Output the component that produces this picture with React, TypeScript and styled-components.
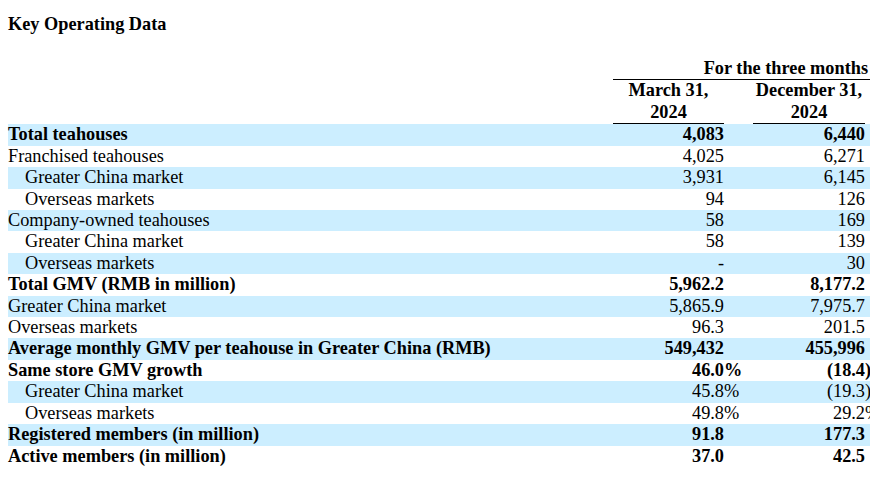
import React from "react";
import styled, { createGlobalStyle } from "styled-components";

const COLS = "605px 111px 29px 112px 28px 112px 28px";
const ROW_H = "21.43px";
const FONT = "18.3px";

const GlobalStyle = createGlobalStyle`
  html, body {
    margin: 0;
    padding: 0;
    overflow: hidden;
    background: #ffffff;
  }
  body {
    font-family: "Liberation Serif", "Times New Roman", serif;
    color: #000000;
  }
`;

const Page = styled.div`
  padding: 13.6px 0 0 8px;
  width: max-content;
`;

const Title = styled.h2`
  margin: 0;
  font-size: ${FONT};
  font-weight: bold;
  line-height: ${ROW_H};
`;

const Table = styled.div`
  margin-top: 22.9px;
  display: flex;
  flex-direction: column;
  width: max-content;
  font-size: ${FONT};
`;

const HeadRow = styled.div`
  display: grid;
  grid-template-columns: ${COLS};
  line-height: ${ROW_H};
  font-weight: bold;
`;

const GroupHead = styled.div`
  grid-column: 2 / 7;
  padding-left: 5px;
  text-align: center;
  white-space: nowrap;
  border-bottom: 1px solid #000000;
`;

const PeriodHead = styled.div<{ $col: number }>`
  grid-column: ${(p) => p.$col};
  text-align: center;
  white-space: nowrap;
  border-bottom: 1px solid #000000;
`;

const Row = styled.div<{ $shade: boolean; $bold: boolean }>`
  display: grid;
  grid-template-columns: ${COLS};
  height: ${ROW_H};
  line-height: ${ROW_H};
  background: ${(p) => (p.$shade ? "#cceeff" : "#ffffff")};
  font-weight: ${(p) => (p.$bold ? "bold" : "normal")};
  white-space: nowrap;
`;

const Label = styled.div<{ $indent: boolean }>`
  padding-left: ${(p) => (p.$indent ? "17px" : "0")};
`;

const Value = styled.div`
  text-align: right;
`;

const Suffix = styled.div`
  text-align: left;
`;

type Cell = { v: string; s?: string };
type DataRow = { label: string; bold?: boolean; indent?: boolean; a: Cell; b: Cell };

const rows: DataRow[] = [
  { label: "Total teahouses", bold: true, a: { v: "4,083" }, b: { v: "6,440" } },
  { label: "Franchised teahouses", a: { v: "4,025" }, b: { v: "6,271" } },
  { label: "Greater China market", indent: true, a: { v: "3,931" }, b: { v: "6,145" } },
  { label: "Overseas markets", indent: true, a: { v: "94" }, b: { v: "126" } },
  { label: "Company-owned teahouses", a: { v: "58" }, b: { v: "169" } },
  { label: "Greater China market", indent: true, a: { v: "58" }, b: { v: "139" } },
  { label: "Overseas markets", indent: true, a: { v: "-" }, b: { v: "30" } },
  { label: "Total GMV (RMB in million)", bold: true, a: { v: "5,962.2" }, b: { v: "8,177.2" } },
  { label: "Greater China market", a: { v: "5,865.9" }, b: { v: "7,975.7" } },
  { label: "Overseas markets", a: { v: "96.3" }, b: { v: "201.5" } },
  {
    label: "Average monthly GMV per teahouse in Greater China (RMB)",
    bold: true,
    a: { v: "549,432" },
    b: { v: "455,996" },
  },
  { label: "Same store GMV growth", bold: true, a: { v: "46.0", s: "%" }, b: { v: "(18.4", s: ")" } },
  { label: "Greater China market", indent: true, a: { v: "45.8", s: "%" }, b: { v: "(19.3", s: ")" } },
  { label: "Overseas markets", indent: true, a: { v: "49.8", s: "%" }, b: { v: "29.2", s: "%" } },
  { label: "Registered members (in million)", bold: true, a: { v: "91.8" }, b: { v: "177.3" } },
  { label: "Active members (in million)", bold: true, a: { v: "37.0" }, b: { v: "42.5" } },
];

export default function App() {
  return (
    <>
      <GlobalStyle />
      <Page>
        <Title>Key Operating Data</Title>
        <Table>
          <HeadRow>
            <div />
            <GroupHead>For the three months ended</GroupHead>
          </HeadRow>
          <HeadRow>
            <PeriodHead $col={2}>
              March 31,
              <br />
              2024
            </PeriodHead>
            <PeriodHead $col={4}>
              December 31,
              <br />
              2024
            </PeriodHead>
          </HeadRow>
          {rows.map((r, i) => (
            <Row key={i} $shade={i % 2 === 0} $bold={!!r.bold}>
              <Label $indent={!!r.indent}>{r.label}</Label>
              <Value>{r.a.v}</Value>
              <Suffix>{r.a.s ?? ""}</Suffix>
              <Value>{r.b.v}</Value>
              <Suffix>{r.b.s ?? ""}</Suffix>
              <Value />
              <Suffix />
            </Row>
          ))}
        </Table>
      </Page>
    </>
  );
}
